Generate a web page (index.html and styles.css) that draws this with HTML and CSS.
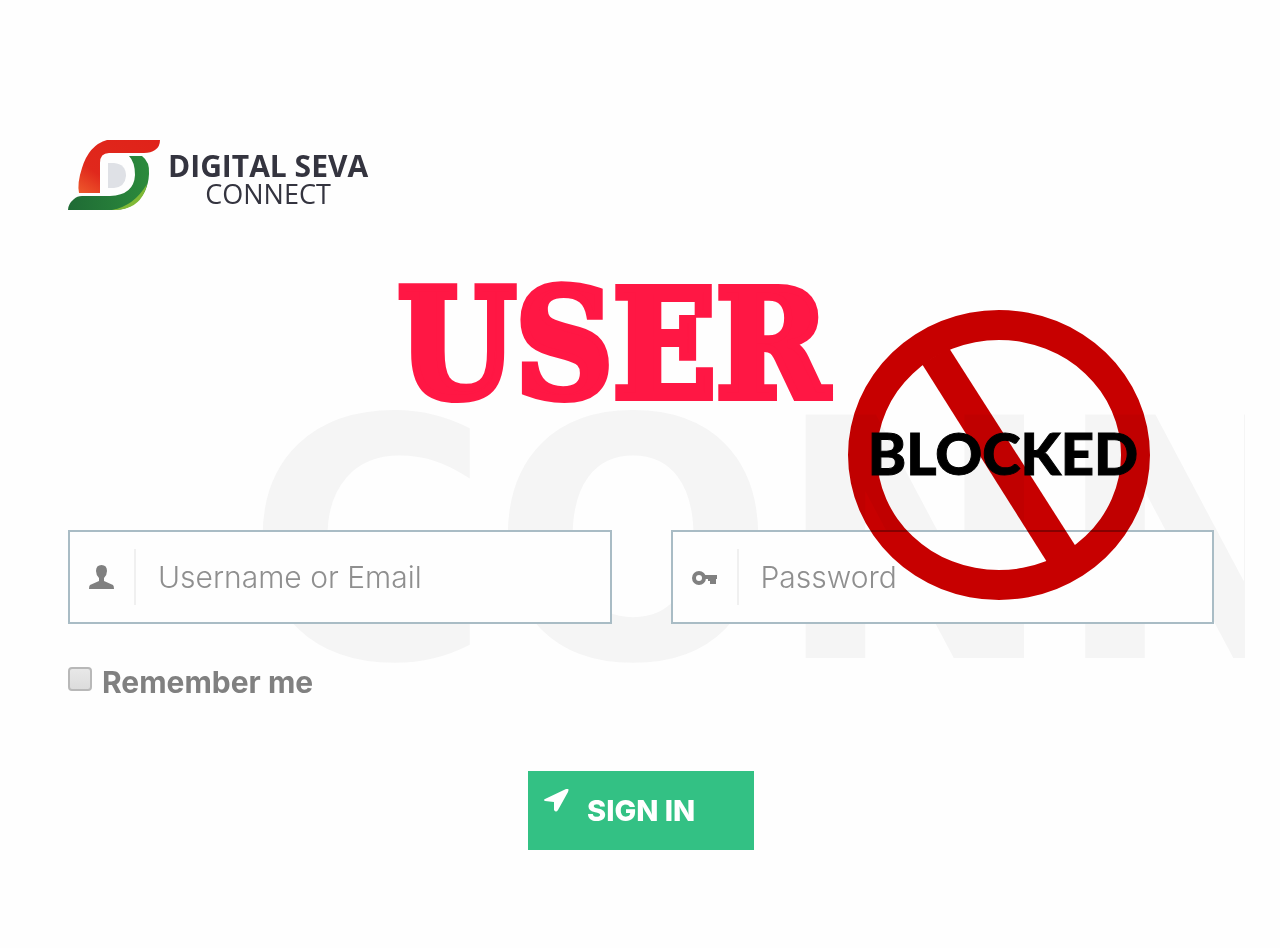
FILE: index.html
```
<!DOCTYPE html>
<html lang="en">
<head>
    <meta charset="UTF-8">
    <meta name="viewport" content="width=device-width, initial-scale=1.0">
    <title>Digital Seva Connect</title>
    <link rel="stylesheet" href="styles.css">
</head>
<body>
    <main class="page">
        <header class="brand">
            <svg class="brand-logo" viewBox="0 0 92 70" aria-hidden="true">
                <defs>
                    <linearGradient id="red" x1="0" y1="1" x2="1" y2="0">
                        <stop offset="0" stop-color="#ee5a2c"/>
                        <stop offset=".3" stop-color="#e0281c"/>
                        <stop offset="1" stop-color="#e02219"/>
                    </linearGradient>
                    <linearGradient id="green" x1="0" y1="0" x2="1" y2="0">
                        <stop offset="0" stop-color="#1f6b35"/>
                        <stop offset="1" stop-color="#2b8a3c"/>
                    </linearGradient>
                </defs>
                <path fill="url(#green)" d="M61 16H74Q82 22 81 34Q80 53 68 62Q60 70 46 70H0Q0 64 6 59Q9 56 14 56H42Q66 55 67 35Q67 22 61 16Z"/>
                <path fill="#80b936" d="M44 70Q66 66 79 44Q75 63 59 68Q53 70 44 70Z"/>
                <path fill="url(#red)" d="M11 53Q9 43 14 28Q21 5 39 0H92Q92 7 87 10Q83 13 76 13H41Q32 13 32 23V53Z"/>
                <path fill="#dfe1e6" d="M40 23H46Q58 24 58 36Q57 47 46 48H40Z"/>
            </svg>
            <div class="brand-name">
                <strong>DIGITAL SEVA</strong>
                <span>CONNECT</span>
            </div>
        </header>

        <h1 class="title">USER</h1>

        <div class="watermark" aria-hidden="true">CONN</div>

        <form class="login">
            <div class="fields">
                <div class="field">
                    <label for="username" aria-label="Username or Email">
                        <svg viewBox="0 0 25 24" width="25" height="24">
                            <path fill="#808080" d="M7 6Q7 0 12.500 0Q18 0 18 6Q18 10 15 13V16L24 20Q25 21 25 24H0Q0 21 1 20L10 16V13Q7 10 7 6Z"/>
                        </svg>
                    </label>
                    <input id="username" type="text" placeholder="Username or Email">
                </div>
                <div class="field">
                    <label for="password" aria-label="Password">
                        <svg viewBox="0 0 25 16" width="25" height="16">
                            <circle cx="7" cy="9" r="5" fill="none" stroke="#808080" stroke-width="4"/>
                            <path fill="#808080" d="M12 6H25V10H24V15H18V12H16V10H12Z"/>
                        </svg>
                    </label>
                    <input id="password" type="password" placeholder="Password">
                </div>
            </div>
            <div class="remember">
                <input id="remember" type="checkbox">
                <label for="remember">Remember me</label>
            </div>
            <button class="sign-in" type="submit">
                <svg viewBox="0 0 25 23" width="25" height="23" aria-hidden="true">
                    <path fill="#fff" d="M24 0Q25 0 24 3L14 21Q12 24 10 21V13L1 12Q-1 11 1 10L22 0Z"/>
                </svg>
                <span>SIGN IN</span>
            </button>

            <!-- stamp over the password field -->
            <svg class="ban" viewBox="0 0 302 290" aria-hidden="true">
                <path fill="#c80000" d="M74 54L101 38L232 243L204 260Z"/>
                <path fill="#c80000" fill-rule="evenodd" d="M0 145A151 145 0 1 1 302 145A151 145 0 1 1 0 145ZM29 145A122 115 0 1 0 273 145A122 115 0 1 0 29 145Z"/>
            </svg>
            <div class="ban-text">BLOCKED</div>
        </form>
    </main>
</body>
</html>
```
FILE: styles.css
```
* {
    box-sizing: border-box;
}
body {
    margin: 0;
    background: #fefefe;
    font-family: Inter, "Open Sans", sans-serif;
    color: #808080;
}
.page {
    position: relative;
    padding: 140px 66px 96px 68px;
    overflow: hidden;
}
.brand {
    display: flex;
    align-items: center;
    gap: 8px;
    height: 70px;
}
.brand-logo {
    width: 92px;
    height: 70px;
}
.brand-name {
    display: flex;
    flex-direction: column;
    align-items: center;
    padding-top: 10px;
    font-family: "Open Sans", sans-serif;
    color: #34343f;
}
.brand-name strong {
    font-size: 30px;
    line-height: 28px;
}
.brand-name span {
    font-size: 27px;
    line-height: 28px;
}
.title {
    margin: 66px 56px 0 0;
    font-family: "DejaVu Serif Condensed", "DejaVu Serif", serif;
    font-size: 150px;
    font-weight: bold;
    line-height: 136px;
    text-align: center;
    color: #ff1744;
    -webkit-text-stroke: 8px #ff1744;
}
.watermark {
    position: absolute;
    top: 383px;
    left: 246px;
    right: 35px;
    overflow: hidden;
    font-family: "DejaVu Sans", sans-serif;
    font-size: 334px;
    font-weight: bold;
    line-height: 320px;
    color: #f5f5f5;
}
.login {
    position: relative;
    display: flex;
    flex-direction: column;
    margin-top: 118px;
}
.fields {
    display: grid;
    grid-template-columns: repeat(2, minmax(0, 1fr));
    gap: 59px;
}
.field {
    display: flex;
    align-items: center;
    height: 94px;
    border: 2px solid #a9bcc5;
    background: #fefefe;
}
.field label {
    display: flex;
    align-items: center;
    width: 66px;
    height: 56px;
    padding-left: 19px;
    border-right: 2px solid #f0f0f0;
}
.field input {
    flex: 1;
    min-width: 0;
    padding: 0 22px;
    border: 0;
    outline: 0;
    background: none;
    font-family: inherit;
    font-size: 30px;
    font-weight: 300;
    color: #808080;
}
.field input::placeholder {
    color: #8f8f8f;
}
.remember {
    display: flex;
    align-items: center;
    gap: 10px;
    height: 36px;
    margin-top: 40px;
    font-size: 30px;
    font-weight: bold;
}
.remember input {
    appearance: none;
    width: 24px;
    height: 24px;
    margin: 0 0 6px;
    border: 2px solid #b8b8b8;
    border-radius: 4px;
    background: linear-gradient(#e8e8e8, #dcdcdc);
}
.remember input:checked {
    background: #33c184;
}
.sign-in {
    display: flex;
    gap: 18px;
    align-self: center;
    width: 226px;
    height: 79px;
    margin-top: 71px;
    padding: 18px 16px;
    border: 0;
    background: #33c184;
    font-family: inherit;
    font-size: 29px;
    font-weight: 800;
    line-height: 44px;
    color: #fff;
    cursor: pointer;
}
.ban {
    position: absolute;
    top: -220px;
    right: 64px;
    width: 302px;
    height: 290px;
    mix-blend-mode: multiply;
    pointer-events: none;
}
.ban-text {
    position: absolute;
    top: -112px;
    right: 60px;
    width: 302px;
    font-family: Lato, sans-serif;
    font-size: 58px;
    font-weight: 900;
    line-height: 70px;
    text-align: center;
    color: #000;
    -webkit-text-stroke: 1px #000;
    pointer-events: none;
}
```
